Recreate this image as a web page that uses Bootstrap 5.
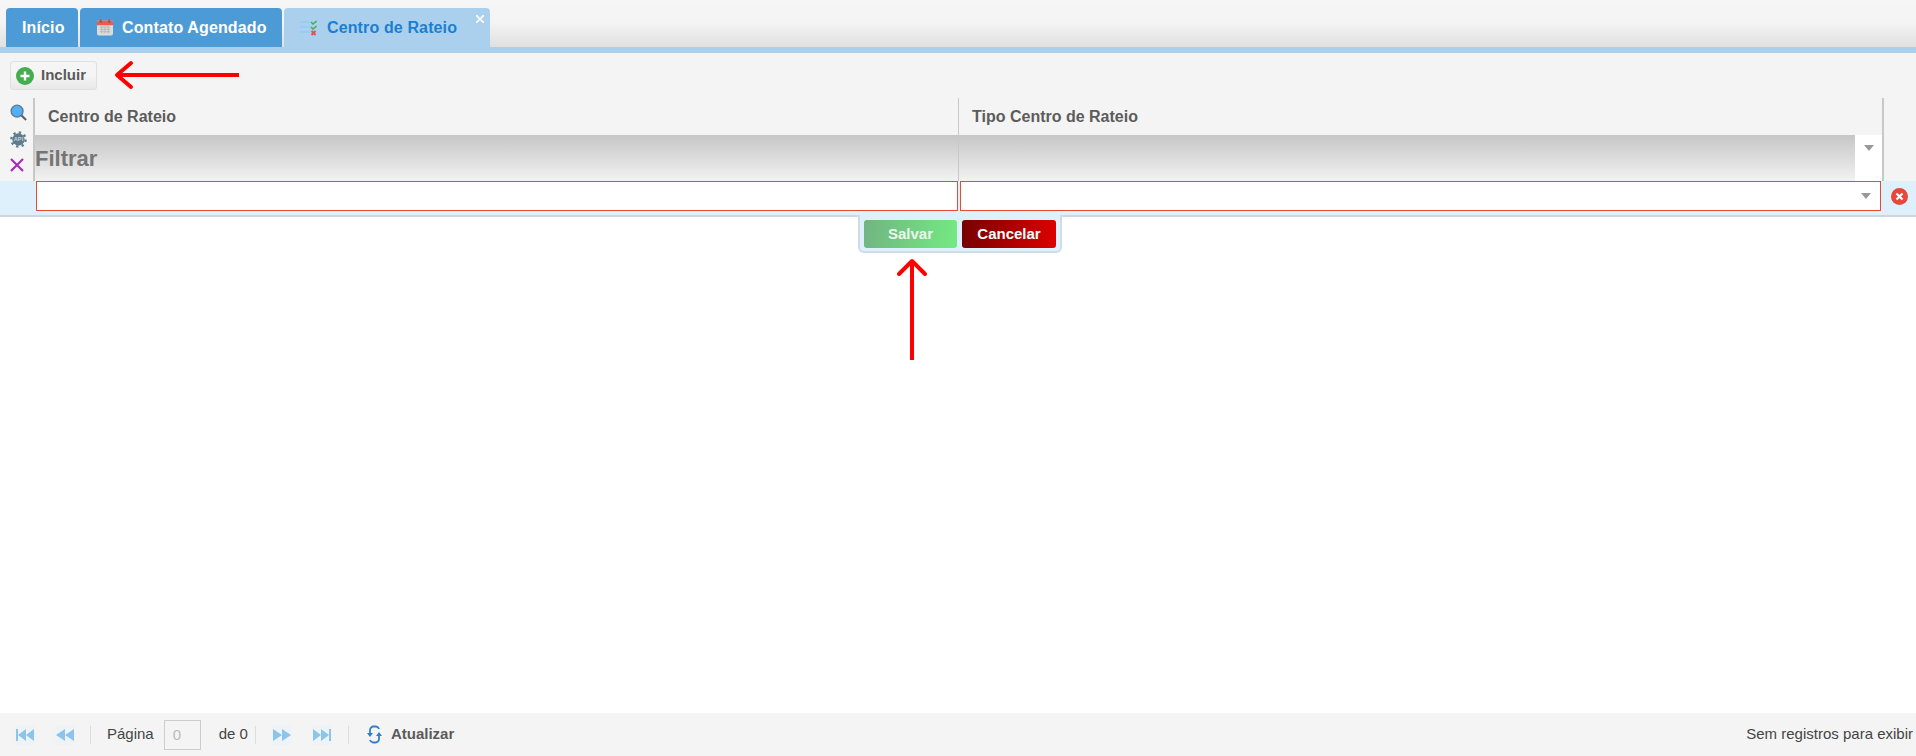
<!DOCTYPE html>
<html lang="pt"><head><meta charset="utf-8"><title>Centro de Rateio</title>
<link href="https://cdn.jsdelivr.net/npm/bootstrap@5.3.0/dist/css/bootstrap.min.css" rel="stylesheet">
<style>
html,body{height:100%;overflow:hidden}
body{font-family:"Liberation Sans",Arial,sans-serif;background:#fff;color:#444}
.shell{height:756px;position:relative}
.tabstrip{height:53px;padding-left:6px;gap:2px;background:linear-gradient(#f6f6f6 0,#f4f4f4 22px,#e0e0e0 47px);border-bottom:6px solid #abd0ed;padding-top:8px}
.tabx{height:39px;background:#4d9bd6;color:#fff;font-weight:700;font-size:16px;letter-spacing:.13px;border-radius:4px 4px 0 0;position:relative}
.tab-a{width:72px;padding-left:16px}
.tab-b{width:202px;padding-left:17px;gap:9px}
.tab-c{width:206px;padding-left:16px;gap:10px;background:#abd0ed;color:#1a7fd2}
.closex{position:absolute;right:6px;top:7px}
.toolbar{height:45px;background:#f4f4f4;padding:8px 0 0 10px}
.incl{width:87px;height:29px;border:1px solid #e0e0e0;border-radius:3px;background:linear-gradient(#f5f5f5 50%,#e8e8e8);font-size:15px;font-weight:700;color:#5a5a5a;padding-left:5px;gap:7px}
.gridwrap{background:#f4f4f4}
.rail{width:35px;height:83px;flex:none;border-right:2px solid #c8c8c8;gap:10px;padding:6px 0 0 10px}
.hcell{height:37px;font-size:16px;font-weight:700;color:#5c5c5c}
.c1{width:924px;padding-left:13px;border-right:1px solid #c8c8c8;flex:none}
.c2{width:896px;padding-left:13px;flex:none}
.endcap{height:83px;width:1849px;border-right:2px solid #c8c8c8}
.frow{height:46px;background:#fff}
.fgrad{width:1820px;height:46px;background:linear-gradient(#c6c6c6,#f2f2f2)}
.fgrad-c1{width:924px;border-right:1px solid #c8c8c8;height:46px;font-size:22px;font-weight:700;color:#757575;flex:none}
.caret{width:0;height:0;border-left:5px solid transparent;border-right:5px solid transparent;border-top:6px solid #999}
.farrow{width:27px;padding-top:10px}
.editrow{height:36px;background:#dff0fd;border-bottom:2px solid #cfd6dc}
.rbox{height:30px;background:#fff;border:1px solid #e74c32;flex:none}
.rb1{width:922px;margin-left:36px}
.rb2{width:921px;margin-left:2px;padding-right:9px}
.errc{margin:7px 0 0 10px}
.panel{width:204px;height:38px;margin-left:858px;background:#dff0fd;border:2px solid #cfdce6;border-top:0;border-radius:0 0 6px 6px;padding:5px 4px;gap:5px;margin-top:-2px;position:relative}
.bsave,.bcancel{height:28px;border-radius:3px;color:#fff;font-weight:700;font-size:15px}
.bsave{width:93px;background:linear-gradient(100deg,#71b482,#74ea82);color:#ecf7ec}
.bcancel{width:94px;background:linear-gradient(90deg,#780000,#dc0000)}
.foot{position:absolute;left:0;right:0;bottom:0;height:43px;background:#f4f4f4;font-size:15px;color:#444;padding:0 3px 0 15px}
.pgi{width:20px;height:20px;flex:none}
.sep{width:1px;height:18px;background:#ddd;flex:none}
.pinput{width:37px;height:30px;border:1px solid #ccc;color:#bbb;padding-left:8px;margin-left:10px;line-height:28px}
.upd{font-weight:700;color:#5a5a5a;margin-left:9px}
.g7{margin-left:7px}.g15{margin-left:15px}.g16{margin-left:16px}.g18{margin-left:18px}.g20{margin-left:20px}
.arrow{position:absolute;overflow:visible}
.arr-l{left:112px;top:60px}
.arr-u{left:897px;top:258px}
</style></head><body>
<div class="shell">
 <div class="tabstrip d-flex align-items-start">
  <div class="tabx tab-a d-flex align-items-center">Início</div>
  <div class="tabx tab-b d-flex align-items-center">
   <svg width="16" height="17" viewBox="0 0 17 17"><rect y="1" width="17" height="16" rx="2" fill="#dcdcd8"/><path d="M0 3a2 2 0 0 1 2-2h13a2 2 0 0 1 2 2v3H0z" fill="#ef5a4e"/><rect x="3" y="0" width="2" height="3.500" fill="#8a5a50"/><rect x="12" y="0" width="2" height="3.500" fill="#8a5a50"/><path d="M3 8h11M3 10.500h11M3 13h11M5 7.500v7M8.500 7.500v7M12 7.500v7" stroke="#b5b5b5" stroke-width="1"/></svg>
   <span>Contato Agendado</span></div>
  <div class="tabx tab-c d-flex align-items-center">
   <svg width="17" height="16" viewBox="0 0 17 16"><path d="M0 2h10M0 7h10M0 12h10" stroke="#8ecbf8" stroke-width="1.500"/><path d="M11 2l2 2 3.500-3M11 7l2 2 3.500-3" stroke="#4cae50" stroke-width="1.600" fill="none"/><path d="M11.500 11l4 4M15.500 11l-4 4" stroke="#ea4f4f" stroke-width="2"/></svg>
   <span>Centro de Rateio</span>
   <svg class="closex" width="8" height="8" viewBox="0 0 8 8"><path d="M0 0l8 8M8 0L0 8" stroke="#fff" stroke-width="1.600"/></svg></div>
 </div>
 <div class="toolbar">
  <div class="incl d-flex align-items-center">
   <svg width="18" height="18" viewBox="0 0 18 18"><circle cx="9" cy="9" r="9" fill="#44ad4e"/><path d="M9 4.500v9M4.500 9h9" stroke="#fff" stroke-width="2.400"/></svg><span>Incluir</span></div>
 </div>
 <div class="gridwrap d-flex">
  <div class="rail d-flex flex-column">
   <svg width="17" height="17" viewBox="0 0 18 18"><circle cx="7.500" cy="7.500" r="6.300" fill="#53aef5" stroke="#5a7f99" stroke-width="1.500"/><path d="M12 12l5 5" stroke="#54636e" stroke-width="2.200"/></svg>
   <svg width="17" height="17" viewBox="0 0 18 18"><circle cx="9" cy="9" r="6.500" fill="#5f7b8d"/><circle cx="9" cy="9" r="7.500" fill="none" stroke="#5f7b8d" stroke-width="2.500" stroke-dasharray="2.500 3.400"/><text x="9" y="11" font-size="6" font-weight="700" text-anchor="middle" fill="#c5d2da">API</text></svg>
   <svg width="14" height="14" viewBox="0 0 14 14"><path d="M1 1l12 12M13 1L1 13" stroke="#a32cb8" stroke-width="2.200"/></svg>
  </div>
  <div class="flex-grow-1">
   <div class="endcap">
    <div class="d-flex hcell">
     <div class="c1 d-flex align-items-center">Centro de Rateio</div>
     <div class="c2 d-flex align-items-center">Tipo Centro de Rateio</div>
    </div>
    <div class="frow d-flex">
     <div class="fgrad d-flex">
      <div class="fgrad-c1 d-flex align-items-center">Filtrar</div>
     </div>
     <div class="farrow d-flex justify-content-center"><span class="caret"></span></div>
    </div>
   </div>
  </div>
 </div>
 <div class="editrow d-flex">
  <div class="rbox rb1"></div>
  <div class="rbox rb2 d-flex align-items-center justify-content-end"><span class="caret"></span></div>
  <svg class="errc" width="17" height="17" viewBox="0 0 17 17"><circle cx="8.500" cy="8.500" r="8.500" fill="#e8473c"/><path d="M5.500 5.500l6 6M11.500 5.500l-6 6" stroke="#fff" stroke-width="2.200"/></svg>
 </div>
 <div class="panel d-flex">
  <div class="bsave d-flex align-items-center justify-content-center">Salvar</div>
  <div class="bcancel d-flex align-items-center justify-content-center">Cancelar</div>
 </div>
 <svg class="arrow arr-l" width="130" height="30" viewBox="0 0 130 30"><path d="M127 15H5" fill="none" stroke="#f00" stroke-width="4"/><path d="M19 3L5 15l14 12" fill="none" stroke="#f00" stroke-width="4" stroke-linecap="round" stroke-linejoin="round"/></svg>
 <svg class="arrow arr-u" width="30" height="105" viewBox="0 0 30 105"><path d="M15 102V5" fill="none" stroke="#f00" stroke-width="4"/><path d="M2 16L15 3l13 13" fill="none" stroke="#f00" stroke-width="4" stroke-linecap="round" stroke-linejoin="round"/></svg>
 <div class="foot d-flex align-items-center">
  <svg class="pgi" viewBox="0 0 20 20"><rect width="20" height="20" fill="#eef3f7"/><path d="M1 4h2v12H1zM3 10l8-6v12zM11 10l8-6v12z" fill="#8cc4ec"/></svg>
  <svg class="pgi g20" viewBox="0 0 20 20"><rect width="20" height="20" fill="#eef3f7"/><path d="M1 10l9-6v12zM10 10l9-6v12z" fill="#8cc4ec"/></svg>
  <span class="sep g15"></span>
  <span class="g16">Página</span><span class="pinput">0</span><span class="g18">de 0</span>
  <span class="sep g7"></span>
  <svg class="pgi g16" viewBox="0 0 20 20"><rect width="20" height="20" fill="#eef3f7"/><path d="M1 4l9 6-9 6zM10 4l9 6-9 6z" fill="#8cc4ec"/></svg>
  <svg class="pgi g20" viewBox="0 0 20 20"><rect width="20" height="20" fill="#eef3f7"/><path d="M1 4l8 6-8 6zM9 4l8 6-8 6zM17 4h2v12h-2z" fill="#8cc4ec"/></svg>
  <span class="sep g16"></span>
  <svg class="g18" width="15" height="19" viewBox="0 0 15 19"><path d="M3 9V5a3.500 3.500 0 0 1 3.500-3.500H9A3.500 3.500 0 0 1 12 4M12 10v4a3.500 3.500 0 0 1-3.500 3.500H6A3.500 3.500 0 0 1 3 15" fill="none" stroke="#2e7fd0" stroke-width="1.800"/><path d="M0 8h6l-3 4zM9 11h6l-3-4z" fill="#2e7fd0"/></svg>
  <span class="upd">Atualizar</span>
  <span class="ms-auto">Sem registros para exibir</span>
 </div>
</div>
<script src="https://cdn.jsdelivr.net/npm/bootstrap@5.3.0/dist/js/bootstrap.bundle.min.js"></script>
</body></html>
